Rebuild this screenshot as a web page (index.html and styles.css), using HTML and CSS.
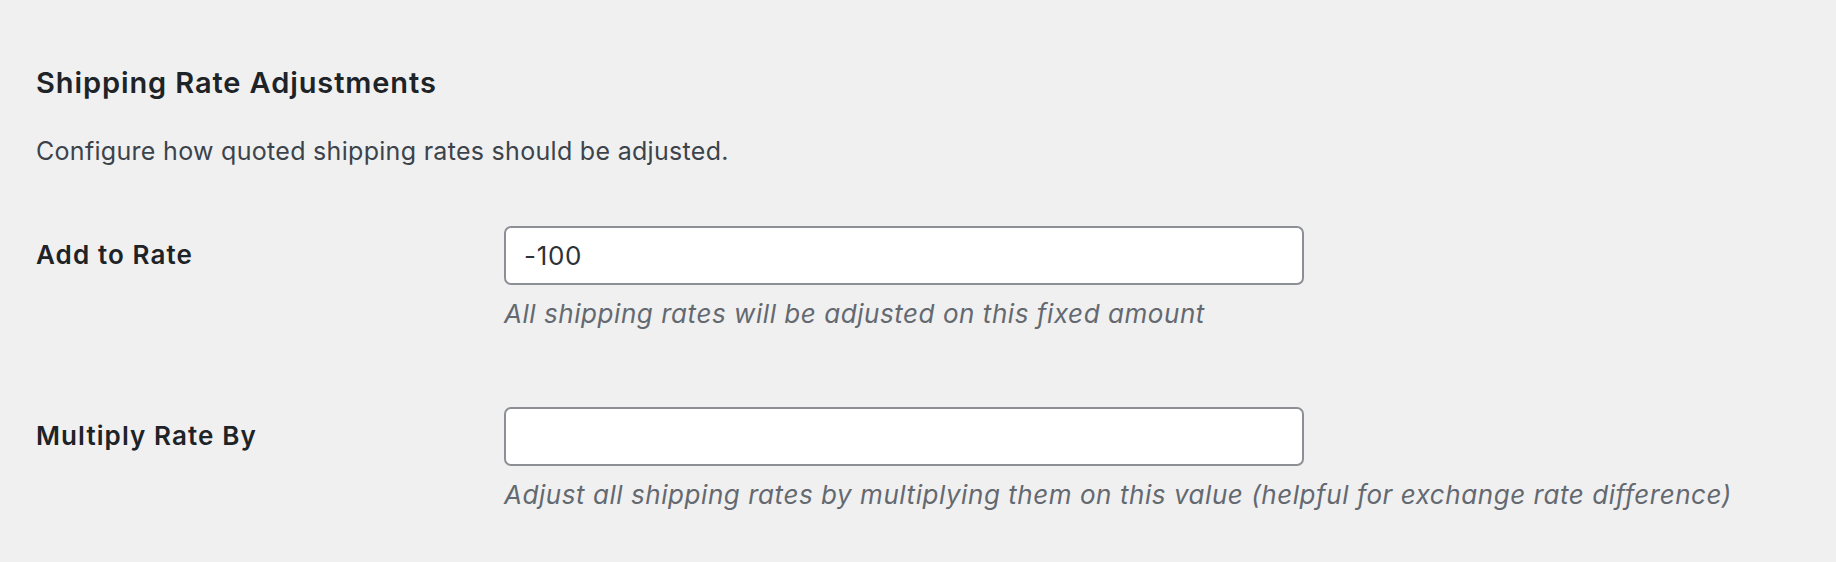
FILE: index.html
```html
<!DOCTYPE html>
<html lang="en">
<head>
<meta charset="utf-8">
<title>Shipping Rate Adjustments</title>
<link rel="stylesheet" href="styles.css">
</head>
<body>
<div class="page">
  <h2 class="title">Shipping Rate Adjustments</h2>
  <p class="intro">Configure how quoted shipping rates should be adjusted.</p>
  <div class="form">
    <div class="row">
      <label class="label" for="add">Add to Rate</label>
      <div class="field">
        <input class="input" id="add" type="text" value="-100">
        <p class="help">All shipping rates will be adjusted on this fixed amount</p>
      </div>
    </div>
    <div class="row">
      <label class="label" for="mul">Multiply Rate By</label>
      <div class="field">
        <input class="input" id="mul" type="text" value="">
        <p class="help">Adjust all shipping rates by multiplying them on this value (helpful for exchange rate difference)</p>
      </div>
    </div>
  </div>
</div>
</body>
</html>
```
FILE: styles.css
```css
html, body {
  margin: 0;
  padding: 0;
  background: #f0f0f1;
}
body {
  font-family: Inter, "Noto Sans", "Liberation Sans", sans-serif;
  color: #1d2327;
}
.page {
  padding: 63px 36px 0 36px;
}
.title {
  margin: 0;
  font-size: 29px;
  line-height: 40px;
  font-weight: 600;
  letter-spacing: 0.9px;
  color: #1d2327;
}
.intro {
  margin: 31px 0 0 0;
  font-size: 25px;
  line-height: 34px;
  letter-spacing: 0.3px;
  color: #3c434a;
}
.form {
  margin-top: 58px;
  display: flex;
  flex-direction: column;
  gap: 76px;
}
.row {
  display: grid;
  grid-template-columns: 468px 800px;
}
.label {
  font-size: 26px;
  line-height: 34px;
  font-weight: 600;
  letter-spacing: 1.1px;
  color: #1d2327;
  padding-top: 12px;
}
.field {
  display: flex;
  flex-direction: column;
}
.input {
  box-sizing: border-box;
  width: 800px;
  height: 59px;
  margin: 0;
  padding: 0 18px;
  border: 2px solid #8c8f94;
  border-radius: 7px;
  background: #fff;
  font-family: inherit;
  font-size: 26px;
  letter-spacing: 0.7px;
  color: #2c3338;
  outline: none;
}
.help {
  margin: 12px 0 0 0;
  font-size: 26px;
  line-height: 34px;
  font-style: italic;
  letter-spacing: 0.55px;
  color: #646970;
  white-space: nowrap;
}
```
